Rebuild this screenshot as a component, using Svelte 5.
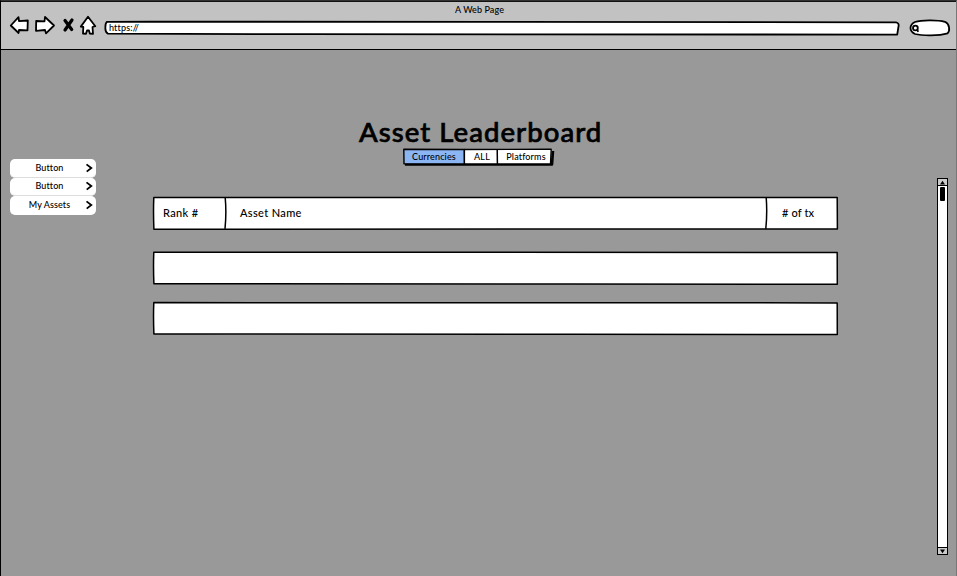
<script>
  const menu = ['Button', 'Button', 'My Assets'];
</script>

<div class="window">
  <header>
    <div class="title"><span>A Web Page</span></div>
    <div class="toolbar">
      <svg class="nav" width="90" height="24" viewBox="0 0 90 24" fill="#fff" stroke="#000" stroke-width="1.8" stroke-linejoin="round" stroke-linecap="round">
        <path d="M1.8 12.5 9.5 4.2 10 8.2 18.8 7.5 18.5 17.3 10 17 9.6 20 Z" />
        <path d="M27.2 8 35.5 8.3 36 4 45 12.5 37 20.3 36 17 27 17.8 Z" />
        <path d="M56 7.5 62.7 16.5M63 7 56 17" stroke-width="3.2" />
        <path d="M79 3.8 86.3 13.2 83.5 14 84 20.8 80.8 20.5 80 17.5 78 17.5 77 20.8 74 20.5 74.3 14 71.8 13.6Z" />
      </svg>
      <div class="address">
        <svg class="frame" viewBox="0 0 796 16"><path d="M3 1.8C120 1.6 230 2 390 1.8S680 2.4 792 2.4Q795.5 3 794.4 7L793.2 14.6C600 14.9 400 14.4 200 14.2L4 13.7Q1 12 1.4 7.4Q1.3 3 3 1.8Z" /></svg>
        <span>https://</span>
      </div>
      <div class="search">
        <svg class="frame" viewBox="0 0 42 18"><path d="M6 3C12 1 28 .6 36 2.8C41 5 41 12 38.5 14.4C30 17 13 16.8 6 15C0 12 0 6 6 3Z" /><circle cx="6.4" cy="9" r="2.4" /><path d="M8.1 10.4 9.2 12.8" /></svg>
      </div>
    </div>
  </header>

  <div class="body">
    <nav>
      {#each menu as label}
        <div class="item">
          <span>{label}</span>
          <svg width="8" height="10" viewBox="0 0 8 10"><path d="M1.5 1.4 6.3 5 1.7 8.6" fill="none" stroke="#000" stroke-width="1.8" /></svg>
        </div>
      {/each}
    </nav>

    <main>
      <h1>Asset Leaderboard</h1>
      <div class="tabs">
        <svg class="frame" viewBox="0 0 152 18">
          <path d="M2 16.4H149L150 3" stroke-width="2.6" fill="none" />
          <path d="M.8 1.3 61.3 1.5 61.5 16 1 15.8Z" fill="#8bb5f3" stroke-width="1.4" />
          <path d="M61.4 1.5 148.2 1.3 147.5 16 61.4 16Z" stroke-width="1.4" />
          <path d="M94.2 1.3 94.4 16" />
        </svg>
        <span class="currencies">Currencies</span>
        <span class="all">ALL</span>
        <span class="platforms">Platforms</span>
      </div>
      <div class="row head">
        <svg class="frame" viewBox="0 0 686 34">
          <path d="M.8 1.6C190 .9 400 1.6 684.2 1.5L684.4 33C460 33.3 210 32.6 .9 33.2Q.2 16 .8 1.6Z" />
          <path d="M72.2 1.5Q73.6 17 72 32.9M613.2 1.5Q614.4 17 612.8 32.9" fill="none" />
        </svg>
        <span class="rank">Rank #</span>
        <span class="name">Asset Name</span>
        <span class="tx"># of tx</span>
      </div>
      <div class="row second">
        <svg class="frame" viewBox="0 0 686 34"><path d="M.8 1.2C190 1.5 400 1 684.2 1.5L684.3 33.2C460 32.6 210 33.4 .9 32.8Q.2 16 .8 1.2Z" /></svg>
      </div>
      <div class="row third">
        <svg class="frame" viewBox="0 0 686 34"><path d="M.8 1.6C190 1.2 400 1.8 684.2 1.9L684.3 33.4C460 33.2 210 33.5 .9 33Q.2 16 .8 1.6Z" /></svg>
      </div>
    </main>

    <div class="scroll">
      <div class="cap"><svg width="7" height="5" viewBox="0 0 7 5"><path d="M1 4.5 3.5.8 6 4.5Z" /></svg></div>
      <div class="track"><div class="thumb"></div></div>
      <div class="cap bottom"><svg width="7" height="5" viewBox="0 0 7 5"><path d="M1 .5 3.5 4.2 6 .5Z" /></svg></div>
    </div>
  </div>
</div>

<style>
  :global(body) { background: #999; }
  .window {
    box-sizing: border-box;
    width: 957px;
    height: 576px;
    border-left: 1px solid #000;
    border-top: 1px solid #333;
    border-right: 1px solid #777;
    background: #999;
    color: #000;
    font-family: Lato, "Open Sans", sans-serif;
    font-weight: 500;
    overflow: hidden;
    display: flex;
    flex-direction: column;
  }
  span { white-space: nowrap; }
  header {
    box-sizing: border-box;
    height: 49px;
    border-top: 1px solid #111;
    border-bottom: 1px solid #000;
    background: #c2c2c2;
    flex: none;
  }
  .title { text-align: center; font-size: 9px; line-height: 12px; height: 12px; padding: 2px 0 0 2px; letter-spacing: .1px; }
  .toolbar { display: flex; align-items: flex-start; }
  .nav { margin: -3px 0 0 8px; flex: none; }
  .address { position: relative; width: 796px; height: 16px; margin: 4px 0 0 5px; flex: none; }
  .address span { position: relative; display: block; padding-left: 5px; font-size: 9px; line-height: 15px; letter-spacing: .15px; }
  .search { position: relative; width: 42px; height: 18px; margin: 3px 0 0 9px; flex: none; }
  .frame { position: absolute; inset: 0; width: 100%; height: 100%; overflow: visible; fill: #fff; stroke: #000; stroke-width: 1.5; stroke-linejoin: round; }
  .address .frame, .search .frame { stroke-width: 1.8; }
  .body { flex: 1; display: flex; align-items: flex-start; }
  nav { width: 86px; margin: 109px 0 0 9px; display: flex; flex-direction: column; flex: none; }
  .item {
    box-sizing: border-box;
    height: 18.5px;
    padding: 0 3px 0 4px;
    display: flex;
    align-items: center;
    background: #fff;
    border-radius: 5px;
    border-bottom: 1px solid #ddd;
  }
  .item:last-child { border-bottom: 0; }
  .item span { flex: 1; text-align: center; font-size: 9px; line-height: 12px; letter-spacing: .1px; }
  .item svg { flex: none; }
  main { width: 686px; margin: 65px 0 0 57px; flex: none; }
  h1 { margin: 0 0 0 206px; height: 33px; font-size: 27.5px; line-height: 34px; font-weight: 500; letter-spacing: 1.05px; white-space: nowrap; -webkit-text-stroke: .7px #000; }
  .tabs { position: relative; display: flex; width: 152px; height: 18px; margin-left: 250px; }
  .tabs span { position: relative; font-size: 9px; line-height: 18px; text-align: center; letter-spacing: .15px; }
  .currencies { width: 62px; }
  .all { width: 34px; }
  .platforms { width: 54px; }
  .row { position: relative; display: flex; height: 34px; }
  .row span { position: relative; font-size: 11px; line-height: 33px; letter-spacing: .35px; }
  .head { margin-top: 30px; }
  .second { margin-top: 21px; }
  .third { margin-top: 16px; }
  .rank { width: 77px; padding-left: 10px; }
  .name { width: 542px; }
  .tx { width: 57px; }
  .row .tx { letter-spacing: .15px; }
  .scroll {
    box-sizing: border-box;
    width: 11px;
    height: 377px;
    margin: 128px 0 0 98px;
    border: 1.5px solid #000;
    background: #fff;
    display: flex;
    flex-direction: column;
    flex: none;
  }
  .cap { height: 6px; display: flex; align-items: center; justify-content: center; background: #ccc; border-bottom: 1px solid #000; flex: none; }
  .cap.bottom { border-bottom: 0; border-top: 1px solid #000; }
  .track { flex: 1; display: flex; justify-content: center; }
  .thumb { width: 5px; height: 14px; margin-top: 1px; border-radius: 1px; background: #000; }
</style>
